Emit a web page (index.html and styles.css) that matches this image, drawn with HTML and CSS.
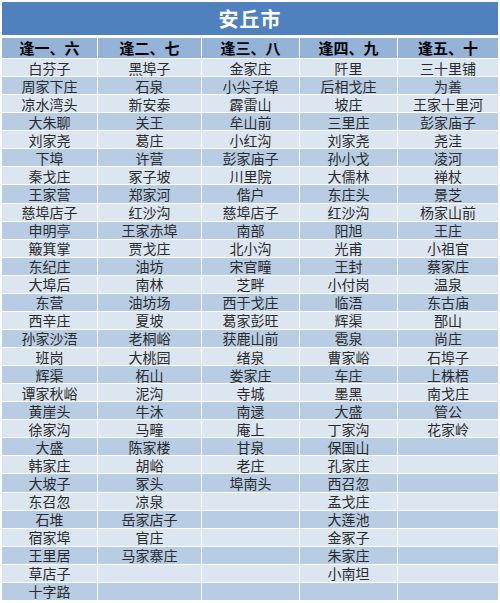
FILE: index.html
```html
<!DOCTYPE html>
<html lang="zh">
<head>
<meta charset="utf-8">
<link rel="stylesheet" href="styles.css">
</head>
<body>
<div class="sheet">
  <div class="title">安丘市</div>
  <div class="grid">
    <div class="r hd"><div>逢一、六</div><div>逢二、七</div><div>逢三、八</div><div>逢四、九</div><div>逢五、十</div></div>
    <div class="r a"><div>白芬子</div><div>黑埠子</div><div>金家庄</div><div>阡里</div><div>三十里铺</div></div>
    <div class="r b"><div>周家下庄</div><div>石泉</div><div>小尖子埠</div><div>后相戈庄</div><div>为善</div></div>
    <div class="r a"><div>凉水湾头</div><div>新安泰</div><div>霹雷山</div><div>坡庄</div><div>王家十里河</div></div>
    <div class="r b"><div>大朱聊</div><div>关王</div><div>牟山前</div><div>三里庄</div><div>彭家庙子</div></div>
    <div class="r a"><div>刘家尧</div><div>葛庄</div><div>小红沟</div><div>刘家尧</div><div>尧洼</div></div>
    <div class="r b"><div>下埠</div><div>许营</div><div>彭家庙子</div><div>孙小戈</div><div>凌河</div></div>
    <div class="r a"><div>秦戈庄</div><div>冢子坡</div><div>川里院</div><div>大儒林</div><div>禅杖</div></div>
    <div class="r b"><div>王家营</div><div>郑家河</div><div>偕户</div><div>东庄头</div><div>景芝</div></div>
    <div class="r a"><div>慈埠店子</div><div>红沙沟</div><div>慈埠店子</div><div>红沙沟</div><div>杨家山前</div></div>
    <div class="r b"><div>申明亭</div><div>王家赤埠</div><div>南部</div><div>阳旭</div><div>王庄</div></div>
    <div class="r a"><div>簸箕掌</div><div>贾戈庄</div><div>北小沟</div><div>光甫</div><div>小祖官</div></div>
    <div class="r b"><div>东纪庄</div><div>油坊</div><div>宋官疃</div><div>王封</div><div>蔡家庄</div></div>
    <div class="r a"><div>大埠后</div><div>南林</div><div>芝畔</div><div>小付岗</div><div>温泉</div></div>
    <div class="r b"><div>东营</div><div>油坊场</div><div>西于戈庄</div><div>临浯</div><div>东古庙</div></div>
    <div class="r a"><div>西辛庄</div><div>夏坡</div><div>葛家彭旺</div><div>辉渠</div><div>郚山</div></div>
    <div class="r b"><div>孙家沙浯</div><div>老桐峪</div><div>获鹿山前</div><div>雹泉</div><div>尚庄</div></div>
    <div class="r a"><div>班岗</div><div>大桃园</div><div>绪泉</div><div>曹家峪</div><div>石埠子</div></div>
    <div class="r b"><div>辉渠</div><div>柘山</div><div>娄家庄</div><div>车庄</div><div>上株梧</div></div>
    <div class="r a"><div>谭家秋峪</div><div>泥沟</div><div>寺城</div><div>墨黑</div><div>南戈庄</div></div>
    <div class="r b"><div>黄崖头</div><div>牛沐</div><div>南逯</div><div>大盛</div><div>管公</div></div>
    <div class="r a"><div>徐家沟</div><div>马疃</div><div>庵上</div><div>丁家沟</div><div>花家岭</div></div>
    <div class="r b"><div>大盛</div><div>陈家楼</div><div>甘泉</div><div>保国山</div><div></div></div>
    <div class="r a"><div>韩家庄</div><div>胡峪</div><div>老庄</div><div>孔家庄</div><div></div></div>
    <div class="r b"><div>大坡子</div><div>冢头</div><div>埠南头</div><div>西召忽</div><div></div></div>
    <div class="r a"><div>东召忽</div><div>凉泉</div><div></div><div>孟戈庄</div><div></div></div>
    <div class="r b"><div>石堆</div><div>岳家店子</div><div></div><div>大莲池</div><div></div></div>
    <div class="r a"><div>宿家埠</div><div>官庄</div><div></div><div>金冢子</div><div></div></div>
    <div class="r b"><div>王里居</div><div>马家寨庄</div><div></div><div>朱家庄</div><div></div></div>
    <div class="r a"><div>草店子</div><div></div><div></div><div>小南坦</div><div></div></div>
    <div class="r b"><div>十字路</div><div></div><div></div><div></div><div></div></div>
  </div>
</div>
</body>
</html>
```

FILE: styles.css
```css
html, body {
  margin: 0;
  padding: 0;
  background: #ffffff;
}

body {
  font-family: "Noto Sans CJK SC", "Noto Sans", sans-serif;
}

.sheet {
  padding: 2px;
  width: 496px;
}

.title {
  height: 33px;
  background: #4f81bd;
  color: #ffffff;
  font-weight: bold;
  font-size: 20px;
  line-height: 33px;
  text-align: center;
  letter-spacing: 1px;
}

.grid {
  margin-top: 3px;
  display: grid;
  grid-template-columns: 95px 103px 97px 97px 100px;
  grid-template-rows: 20px;
  grid-auto-rows: 17.07px;
  column-gap: 1px;
  row-gap: 1px;
}

.r {
  display: contents;
}

.r > div {
  display: flex;
  align-items: center;
  justify-content: center;
  font-size: 14px;
  line-height: 16px;
  color: #2b2b2b;
  white-space: nowrap;
  overflow: hidden;
}

.hd > div {
  background: #95b3d7;
  color: #000000;
  font-weight: bold;
  font-size: 15px;
  line-height: 18px;
}

.a > div {
  background: #dce6f1;
}

.b > div {
  background: #b8cce4;
}
```
